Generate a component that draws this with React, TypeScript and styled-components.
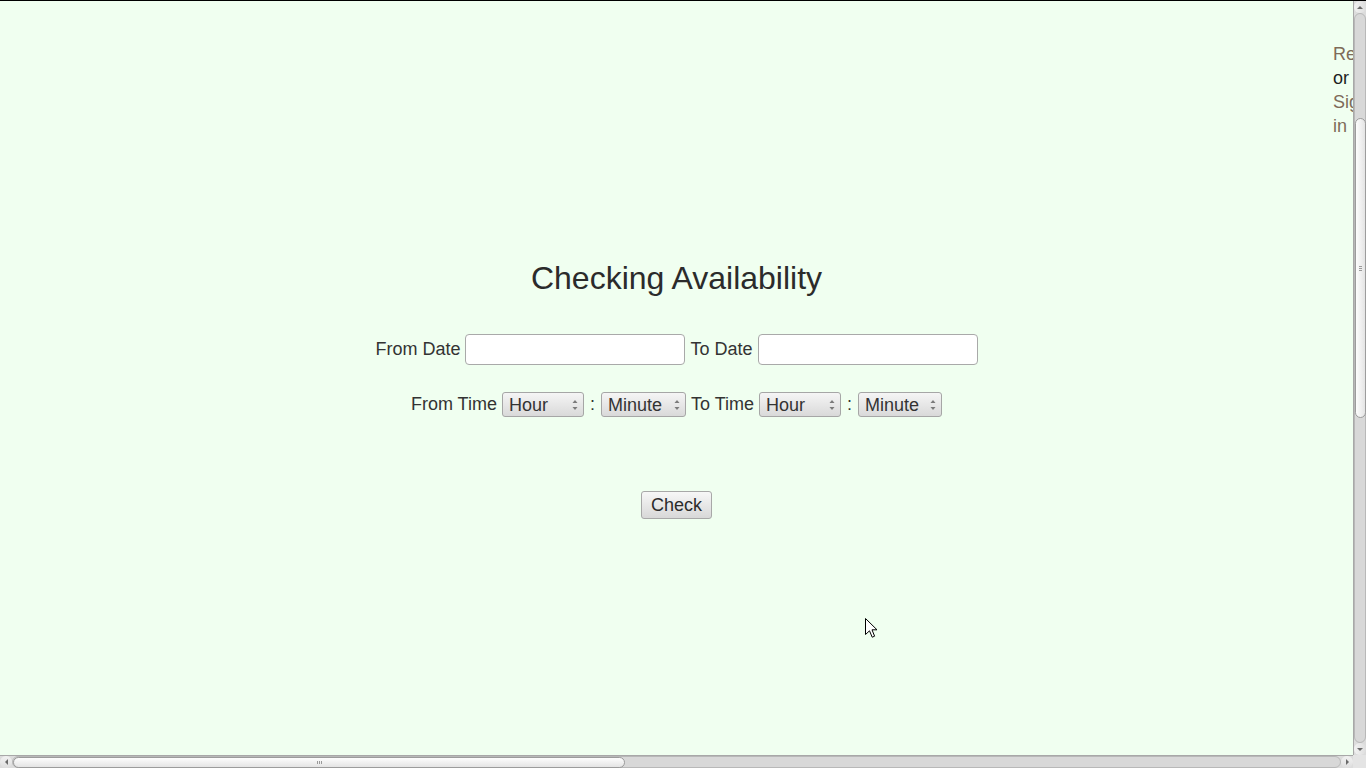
import React from "react";
import styled, { createGlobalStyle } from "styled-components";

const GlobalStyle = createGlobalStyle`
  html, body {
    margin: 0;
    padding: 0;
    overflow: hidden;
    background: #f0fff0;
  }
  body {
    font-family: "Liberation Sans", Arial, sans-serif;
  }
`;

const Frame = styled.div`
  width: 1366px;
  height: 768px;
  box-sizing: border-box;
  border-top: 1px solid #000;
  background: #f0fff0;
  display: grid;
  grid-template-columns: 1353px 13px;
  grid-template-rows: 754px 13px;
`;

const Viewport = styled.div`
  position: relative;
  overflow: hidden;
  display: grid;
  grid-template-columns: 1fr 20px;
  grid-template-rows: 100%;
`;

const Main = styled.main`
  grid-column: 1 / -1;
  grid-row: 1;
  display: flex;
  flex-direction: column;
  align-items: center;
  padding-top: 259px;
  color: #333;
`;

const Title = styled.h1`
  margin: 0;
  font-size: 32px;
  line-height: 37px;
  font-weight: normal;
  color: #2b2b2b;
`;

const FormRow = styled.div<{ $top: number; $height: number }>`
  display: flex;
  align-items: center;
  gap: 5px;
  margin-top: ${(p) => p.$top}px;
  height: ${(p) => p.$height}px;
  font-size: 18px;
  color: #333;
`;

const Label = styled.span`
  white-space: nowrap;
`;

const TextInput = styled.input`
  box-sizing: border-box;
  width: 220px;
  height: 31px;
  border: 1px solid #a9a9a9;
  border-radius: 4px;
  background: #fff;
  padding: 0 6px;
  font: inherit;
  outline: none;
`;

const SelectWrap = styled.span<{ $w: number }>`
  position: relative;
  display: inline-flex;
  width: ${(p) => p.$w}px;
  height: 25px;
`;

const Select = styled.select`
  appearance: none;
  -webkit-appearance: none;
  box-sizing: border-box;
  width: 100%;
  height: 25px;
  margin: 0;
  border: 1px solid #a6a6a6;
  border-radius: 3px;
  background: linear-gradient(#f5f5f5, #d9d9d9);
  font: 18px "Liberation Sans", Arial, sans-serif;
  color: #333;
  padding: 0 0 0 6px;
  outline: none;
`;

const SelectArrows = styled.svg`
  position: absolute;
  right: 6px;
  top: 7px;
  width: 6px;
  height: 12px;
  pointer-events: none;
`;

const Colon = styled.span`
  padding: 0 1px;
`;

const CheckButton = styled.button`
  margin-top: 74px;
  box-sizing: border-box;
  width: 71px;
  height: 28px;
  border: 1px solid #a8a8a8;
  border-radius: 3px;
  background: linear-gradient(#f7f7f7, #d8d8d8);
  font: 18px "Liberation Sans", Arial, sans-serif;
  color: #2b2b2b;
  padding: 0;
`;

const Sidebar = styled.nav`
  grid-column: 2;
  grid-row: 1;
  padding-top: 41px;
  font-size: 18px;
  line-height: 24px;
`;

const SideLink = styled.a`
  display: block;
  color: #7e6b58;
  text-decoration: none;
`;

const SideText = styled.span`
  display: block;
  color: #1e1e1e;
`;

const Cursor = styled.svg`
  position: absolute;
  left: 865px;
  top: 617px;
  width: 13px;
  height: 21px;
`;

/* scrollbars */
const VBar = styled.div`
  display: flex;
  flex-direction: column;
  background: #dcdcdc;
  border-left: 1px solid #a8a8a8;
  box-sizing: border-box;
`;

const HBar = styled.div`
  display: flex;
  background: #dcdcdc;
  border-top: 1px solid #a8a8a8;
  box-sizing: border-box;
`;

const ArrowButton = styled.div<{ $vertical?: boolean }>`
  flex: 0 0 12px;
  display: flex;
  align-items: center;
  justify-content: center;
  background: linear-gradient(${(p) => (p.$vertical ? "to right" : "to bottom")}, #f2f2f2, #dedede);
  border-radius: 6px;
`;

const VTrack = styled.div`
  flex: 1;
  display: flex;
  flex-direction: column;
  align-items: center;
  background: #d8d8d8;
  border-radius: 6px;
  border: 1px solid #b8b8b8;
  box-sizing: border-box;
`;

const HTrack = styled.div`
  flex: 1;
  display: flex;
  align-items: center;
  background: #d8d8d8;
  border-radius: 6px;
  border: 1px solid #b8b8b8;
  box-sizing: border-box;
`;

const VThumb = styled.div`
  margin-top: 104px;
  width: 11px;
  height: 300px;
  box-sizing: border-box;
  border: 1px solid #9c9c9c;
  border-radius: 6px;
  background: linear-gradient(to right, #fdfdfd, #e4e4e4);
  display: flex;
  align-items: center;
  justify-content: center;
`;

const HThumb = styled.div`
  margin-left: 0;
  width: 612px;
  height: 11px;
  box-sizing: border-box;
  border: 1px solid #9c9c9c;
  border-radius: 6px;
  background: linear-gradient(to bottom, #fdfdfd, #e4e4e4);
  display: flex;
  align-items: center;
  justify-content: center;
`;

const VGrip = styled.div`
  width: 3px;
  height: 5px;
  background: repeating-linear-gradient(to bottom, #9a9a9a 0 1px, transparent 1px 2px);
`;

const HGrip = styled.div`
  width: 5px;
  height: 3px;
  background: repeating-linear-gradient(to right, #9a9a9a 0 1px, transparent 1px 2px);
`;

const Corner = styled.div`
  background: #e4e4e4;
`;

const Tri = ({ dir }: { dir: "up" | "down" | "left" | "right" }) => {
  const pts = {
    up: "0,4 3,1 6,4",
    down: "0,1 3,4 6,1",
    left: "4,0 1,3 4,6",
    right: "1,0 4,3 1,6",
  }[dir];
  const vertical = dir === "up" || dir === "down";
  return (
    <svg width={vertical ? 6 : 5} height={vertical ? 5 : 6} viewBox={vertical ? "0 0 6 5" : "0 0 5 6"}>
      <polygon points={pts} fill="#6a6a6a" />
    </svg>
  );
};

const TimeSelect = ({ placeholder, width }: { placeholder: string; width: number }) => (
  <SelectWrap $w={width}>
    <Select defaultValue="">
      <option value="">{placeholder}</option>
    </Select>
    <SelectArrows viewBox="0 0 6 12">
      <polygon points="0.5,4 3,1 5.5,4" fill="#7a7a7a" />
      <polygon points="0.5,8 3,11 5.5,8" fill="#7a7a7a" />
    </SelectArrows>
  </SelectWrap>
);

export default function App() {
  return (
    <>
      <GlobalStyle />
      <Frame>
        <Viewport>
          <Main>
            <Title>Checking Availability</Title>
            <FormRow $top={37} $height={31}>
              <Label>From Date</Label>
              <TextInput type="text" />
              <Label>To Date</Label>
              <TextInput type="text" />
            </FormRow>
            <FormRow $top={27} $height={25}>
              <Label>From Time</Label>
              <TimeSelect placeholder="Hour" width={82} />
              <Colon>:</Colon>
              <TimeSelect placeholder="Minute" width={85} />
              <Label>To Time</Label>
              <TimeSelect placeholder="Hour" width={82} />
              <Colon>:</Colon>
              <TimeSelect placeholder="Minute" width={84} />
            </FormRow>
            <CheckButton type="button">Check</CheckButton>
          </Main>
          <Sidebar>
            <SideLink href="#">Register</SideLink>
            <SideText>or</SideText>
            <SideLink href="#">Sign in</SideLink>
          </Sidebar>
          <Cursor viewBox="0 0 13 21">
            <path
              d="M0.5 0.5 L0.5 16.5 L4.5 12.8 L7.2 19.2 L9.6 18.2 L7 11.8 L12 11.8 Z"
              fill="#fff"
              stroke="#000"
              strokeWidth="1"
              strokeLinejoin="miter"
            />
          </Cursor>
        </Viewport>
        <VBar>
          <ArrowButton $vertical>
            <Tri dir="up" />
          </ArrowButton>
          <VTrack>
            <VThumb>
              <VGrip />
            </VThumb>
          </VTrack>
          <ArrowButton $vertical>
            <Tri dir="down" />
          </ArrowButton>
        </VBar>
        <HBar>
          <ArrowButton>
            <Tri dir="left" />
          </ArrowButton>
          <HTrack>
            <HThumb>
              <HGrip />
            </HThumb>
          </HTrack>
          <ArrowButton>
            <Tri dir="right" />
          </ArrowButton>
        </HBar>
        <Corner />
      </Frame>
    </>
  );
}
